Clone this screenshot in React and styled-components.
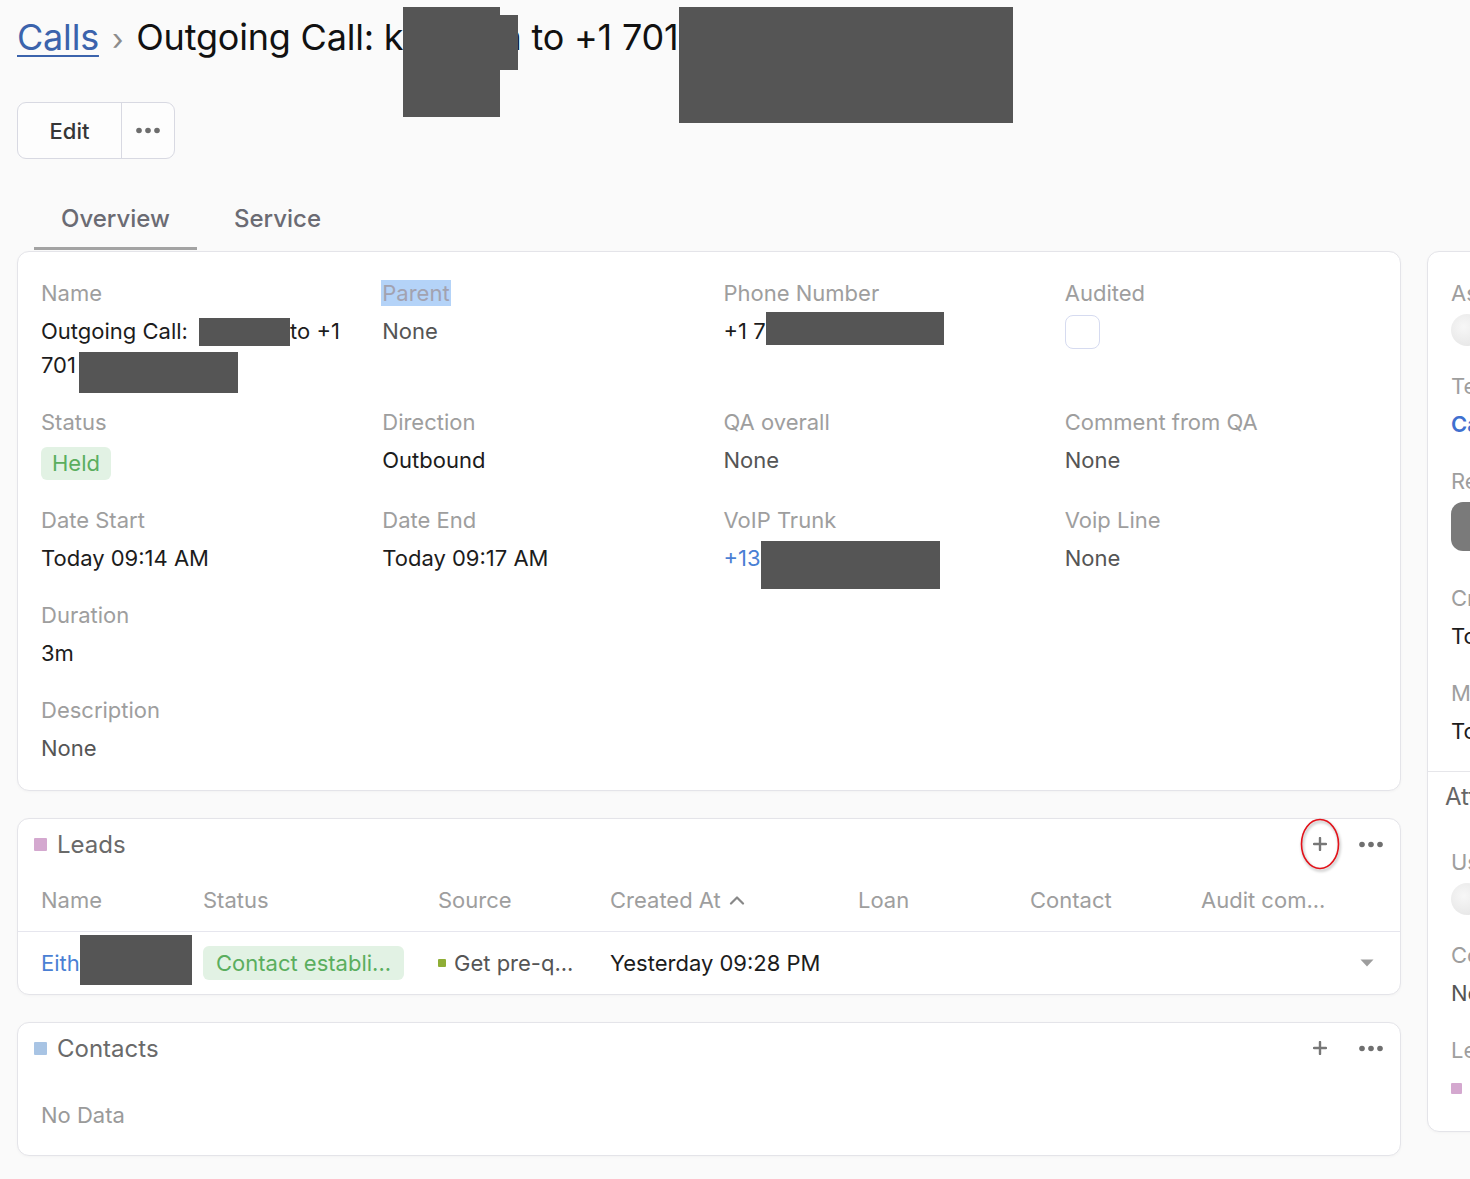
import React from 'react';
import styled, { createGlobalStyle } from 'styled-components';

const Global = createGlobalStyle`
  html, body { margin: 0; padding: 0; background: #fafafa; overflow: hidden; }
  body { font-family: Inter, "Noto Sans", sans-serif; color: #1c1c1c; -webkit-font-smoothing: antialiased; }
  *, *::before, *::after { box-sizing: border-box; }
`;

const Page = styled.div`
  width: 1470px;
  height: 1179px;
  overflow: hidden;
  padding: 15px 0 0 17px;
`;

const Breadcrumb = styled.h1`
  margin: 0;
  display: flex;
  align-items: baseline;
  gap: 13px;
  font-size: 36px;
  line-height: 44px;
  font-weight: 400;
  letter-spacing: -0.2px;
  color: #111;
  white-space: nowrap;
`;

const CrumbLink = styled.a`
  color: #3b63ac;
  text-decoration: underline;
  text-decoration-thickness: 2px;
  text-underline-offset: 5px;
`;

const CrumbSep = styled.span`
  color: #8c8c8c;
  font-size: 30px;
`;

const Redact = styled.span`
  display: inline-block;
  position: relative;
  width: ${p => p.$w}px;
  height: 0;
  vertical-align: baseline;
  margin-left: ${p => p.$ml || 0}px;
  &::before {
    content: '';
    position: absolute;
    left: 0;
    width: ${p => p.$w}px;
    top: ${p => p.$t}px;
    height: ${p => p.$h}px;
    background: #555;
  }
`;

const TitleRedact = styled(Redact)`
  &::after {
    content: '';
    position: absolute;
    left: ${p => p.$w}px;
    width: 18px;
    top: -35px;
    height: 55px;
    background: #555;
  }
`;

const BtnGroup = styled.div`
  display: inline-flex;
  margin-top: 41px;
  height: 57px;
  border: 1.5px solid #d8d9e2;
  border-radius: 9px;
  background: #fdfdfd;
  overflow: hidden;
`;

const Btn = styled.button`
  width: ${p => p.$w}px;
  border: 0;
  padding: 0;
  background: transparent;
  font-family: Inter, sans-serif;
  font-size: 22px;
  font-weight: 500;
  color: #363636;
  display: flex;
  align-items: center;
  justify-content: center;
  & + & { border-left: 1.5px solid #d8d9e2; }
`;

const Tabs = styled.nav`
  display: flex;
  gap: 10px;
  height: 64px;
  margin: 27px 0 0 17px;
`;

const Tab = styled.div`
  display: flex;
  align-items: center;
  padding: 3px 27px 0;
  font-size: 24px;
  font-weight: 500;
  color: #6b6b73;
  border-bottom: 3px solid ${p => (p.$active ? '#a3a3a3' : 'transparent')};
`;

const Columns = styled.div`
  display: grid;
  grid-template-columns: 1384px 380px;
  column-gap: 26px;
  align-items: start;
  margin-top: 1px;
`;

const MainCol = styled.div`
  display: flex;
  flex-direction: column;
  gap: 27px;
`;

const Card = styled.section`
  background: #fff;
  border: 1px solid #e4e4e9;
  border-radius: 12px;
  box-shadow: 0 1px 3px rgba(0, 0, 0, 0.03);
  position: relative;
`;

const FieldGrid = styled.div`
  display: grid;
  grid-template-columns: repeat(4, 1fr);
  column-gap: 20px;
  row-gap: 25px;
  padding: 26px 14px 25px 23px;
`;

const Field = styled.div``;

const Label = styled.div`
  font-size: 22px;
  line-height: 30px;
  color: #9e9e9e;
  white-space: nowrap;
`;

const Selected = styled.span`
  background: #b4d3f8;
  color: #a2a2b0;
  padding: 0 1px;
  margin-left: -1px;
`;

const Value = styled.div`
  margin-top: 6px;
  font-size: 22px;
  line-height: 34px;
  color: ${p => (p.$muted ? '#555' : '#1c1c1c')};
  display: ${p => (p.$flex ? 'flex' : 'block')};
  white-space: nowrap;
`;

const Link = styled.span`
  color: #4a7fd4;
`;

const Badge = styled.span`
  display: inline-block;
  height: ${p => p.$h || 33}px;
  line-height: ${p => p.$h || 33}px;
  margin-top: ${p => p.$mt || 0}px;
  padding: 0 ${p => p.$px || 11}px;
  border-radius: 6px;
  background: #e2f2e4;
  color: #5aae5e;
  font-size: 22px;
  white-space: nowrap;
`;

const Checkbox = styled.span`
  display: block;
  width: 35px;
  height: 34px;
  margin-top: 1px;
  border: 1.5px solid #d6dbf0;
  border-radius: 8px;
  background: #fff;
`;

const PanelHeader = styled.header`
  display: flex;
  align-items: center;
  height: 50px;
  padding: 0 13px 0 16px;
  gap: 10px;
`;

const Swatch = styled.span`
  display: inline-block;
  flex: none;
  width: ${p => p.$s || 13}px;
  height: ${p => p.$s || 13}px;
  margin-top: ${p => p.$mt || 0}px;
  background: ${p => p.$color};
  border-radius: 1px;
`;

const PanelTitle = styled.h3`
  margin: 0;
  flex: 1;
  font-size: 24px;
  font-weight: 400;
  color: #6a6a6a;
`;

const Actions = styled.div`
  display: flex;
  gap: 19px;
`;

const IconBtn = styled.button`
  position: relative;
  width: 32px;
  height: 32px;
  padding: 0;
  border: 0;
  background: none;
  display: flex;
  align-items: center;
  justify-content: center;
`;

const Annotation = styled.svg`
  position: absolute;
  left: -4px;
  top: -10px;
  width: 40px;
  height: 52px;
  overflow: visible;
  filter: drop-shadow(1px 2px 1.5px rgba(0, 0, 0, 0.35));
  pointer-events: none;
`;

const TableRow = styled.div`
  display: grid;
  grid-template-columns: 162px 235px 172px 248px 172px 171px 1fr 40px;
  align-items: center;
  height: ${p => (p.$head ? 63 : 62)}px;
  padding: 0 13px 0 23px;
  border-bottom: ${p => (p.$head ? '1px solid #e6e6ee' : '0')};
  font-size: 22px;
  line-height: 34px;
`;

const HeadCell = styled.div`
  color: #9e9e9e;
  display: flex;
  align-items: center;
  gap: 8px;
  white-space: nowrap;
`;

const Cell = styled.div`
  display: flex;
  align-items: center;
  gap: 8px;
  white-space: nowrap;
  color: ${p => p.$c || '#1c1c1c'};
`;

const CaretCell = styled.div`
  display: flex;
  justify-content: center;
`;

const Empty = styled.div`
  padding: 27px 23px 25px;
  font-size: 22px;
  line-height: 30px;
  color: #9a9a9a;
`;

const SideSection = styled.div`
  display: flex;
  flex-direction: column;
  gap: 25px;
  padding: ${p => p.$pad};
  & + & { border-top: 1px solid #e6e6ea; }
`;

const SideBlock = styled.div`
  padding-left: ${p => p.$indent || 0}px;
`;

const SideHead = styled.div`
  height: 50px;
  line-height: 50px;
  padding-left: 17px;
  font-size: 24px;
  color: #666;
`;

const Avatar = styled.div`
  margin-top: 6px;
  width: 32px;
  height: 32px;
  border-radius: 50%;
  background: radial-gradient(circle at 40% 40%, #f7f7f7, #e2e2e2);
`;

const Strong = styled.span`
  color: #3f70cf;
  font-weight: 600;
`;

const AudioBar = styled.div`
  margin: 6px 0 7px;
  width: 300px;
  height: 49px;
  border-radius: 12px;
  background: #7a7a7a;
`;

const Dots = ({ color = '#6f6f6f' }) => (
  <svg width="24" height="7" viewBox="0 0 24 7">
    <circle cx="3" cy="3.5" r="2.8" fill={color} />
    <circle cx="12" cy="3.5" r="2.8" fill={color} />
    <circle cx="21" cy="3.5" r="2.8" fill={color} />
  </svg>
);

const Plus = () => (
  <svg width="14" height="14" viewBox="0 0 14 14">
    <path d="M7 1v12M1 7h12" stroke="#777" strokeWidth="2.4" strokeLinecap="round" />
  </svg>
);

const ChevronUp = () => (
  <svg width="16" height="10" viewBox="0 0 16 10">
    <path d="M2 8.5 8 2.5l6 6" fill="none" stroke="#888" strokeWidth="2.2" strokeLinecap="round" strokeLinejoin="round" />
  </svg>
);

const CaretDown = () => (
  <svg width="14" height="8" viewBox="0 0 14 8">
    <path d="M0.5 0.5h13L7 7.5z" fill="#9d9d9d" />
  </svg>
);

const Panel = ({ title, color, annotate, children }) => (
  <Card>
    <PanelHeader>
      <Swatch $color={color} />
      <PanelTitle>{title}</PanelTitle>
      <Actions>
        <IconBtn>
          <Plus />
          {annotate && (
            <Annotation viewBox="0 0 40 52">
              <ellipse cx="20" cy="26" rx="18.5" ry="24.5" fill="none" stroke="#e3121a" strokeWidth="1.6" />
            </Annotation>
          )}
        </IconBtn>
        <IconBtn>
          <Dots />
        </IconBtn>
      </Actions>
    </PanelHeader>
    {children}
  </Card>
);

export default function App() {
  return (
    <Page>
      <Global />
      <Breadcrumb>
        <CrumbLink>Calls</CrumbLink>
        <CrumbSep>›</CrumbSep>
        <span>
          Outgoing Call: k<TitleRedact $w={97} $t={-43} $h={110} />n to +1 701
          <Redact $w={334} $t={-43} $h={116} />
        </span>
      </Breadcrumb>

      <BtnGroup>
        <Btn $w={103}>Edit</Btn>
        <Btn $w={53}>
          <Dots color="#6d6d6d" />
        </Btn>
      </BtnGroup>

      <Tabs>
        <Tab $active>Overview</Tab>
        <Tab>Service</Tab>
      </Tabs>

      <Columns>
        <MainCol>
          <Card>
            <FieldGrid>
              <Field>
                <Label>Name</Label>
                <Value>
                  Outgoing Call: <Redact $w={91} $t={-21} $h={28} $ml={5} />to +1
                  <br />
                  701<Redact $w={159} $t={-21} $h={41} $ml={3} />
                </Value>
              </Field>
              <Field>
                <Label><Selected>Parent</Selected></Label>
                <Value $muted>None</Value>
              </Field>
              <Field>
                <Label>Phone Number</Label>
                <Value>+1 7<Redact $w={178} $t={-27} $h={33} /></Value>
              </Field>
              <Field>
                <Label>Audited</Label>
                <Value $flex><Checkbox /></Value>
              </Field>

              <Field>
                <Label>Status</Label>
                <Value $flex><Badge $mt={4}>Held</Badge></Value>
              </Field>
              <Field>
                <Label>Direction</Label>
                <Value>Outbound</Value>
              </Field>
              <Field>
                <Label>QA overall</Label>
                <Value $muted>None</Value>
              </Field>
              <Field>
                <Label>Comment from QA</Label>
                <Value $muted>None</Value>
              </Field>

              <Field>
                <Label>Date Start</Label>
                <Value>Today 09:14 AM</Value>
              </Field>
              <Field>
                <Label>Date End</Label>
                <Value>Today 09:17 AM</Value>
              </Field>
              <Field>
                <Label>VoIP Trunk</Label>
                <Value><Link>+13</Link><Redact $w={179} $t={-25} $h={48} /></Value>
              </Field>
              <Field>
                <Label>Voip Line</Label>
                <Value $muted>None</Value>
              </Field>

              <Field>
                <Label>Duration</Label>
                <Value>3m</Value>
              </Field>
              <Field /><Field /><Field />

              <Field>
                <Label>Description</Label>
                <Value $muted>None</Value>
              </Field>
            </FieldGrid>
          </Card>

          <Panel title="Leads" color="#d4a8cf" annotate>
            <TableRow $head>
              <HeadCell>Name</HeadCell>
              <HeadCell>Status</HeadCell>
              <HeadCell>Source</HeadCell>
              <HeadCell>Created At <ChevronUp /></HeadCell>
              <HeadCell>Loan</HeadCell>
              <HeadCell>Contact</HeadCell>
              <HeadCell>Audit com...</HeadCell>
              <HeadCell />
            </TableRow>
            <TableRow>
              <Cell>
                <span><Link>Eith</Link><Redact $w={112} $t={-36} $h={50} /></span>
              </Cell>
              <Cell><Badge $h={34} $px={13}>Contact establi...</Badge></Cell>
              <Cell $c="#555"><Swatch $color="#8fae36" $s={8} />Get pre-q...</Cell>
              <Cell>Yesterday 09:28 PM</Cell>
              <Cell />
              <Cell />
              <Cell />
              <CaretCell><CaretDown /></CaretCell>
            </TableRow>
          </Panel>

          <Panel title="Contacts" color="#a8c4e4">
            <Empty>No Data</Empty>
          </Panel>
        </MainCol>

        <Card>
          <SideSection $pad="26px 20px 23px 23px">
            <SideBlock>
              <Label>Assigned User</Label>
              <Avatar />
            </SideBlock>
            <SideBlock>
              <Label>Teams</Label>
              <Value><Strong>Call Center</Strong></Value>
            </SideBlock>
            <SideBlock>
              <Label>Recording</Label>
              <AudioBar />
            </SideBlock>
            <SideBlock>
              <Label>Created</Label>
              <Value>Today 09:17 AM</Value>
            </SideBlock>
            <SideBlock>
              <Label>Modified</Label>
              <Value>Today 09:17 AM</Value>
            </SideBlock>
          </SideSection>
          <SideSection $pad="0 0 37px 0">
            <SideHead>Attendees</SideHead>
            <SideBlock $indent={23}>
              <Label>Users</Label>
              <Avatar />
            </SideBlock>
            <SideBlock $indent={23}>
              <Label>Contacts</Label>
              <Value $muted>None</Value>
            </SideBlock>
            <SideBlock $indent={23}>
              <Label>Leads</Label>
              <Value $flex><Swatch $color="#d4a8cf" $s={11} $mt={12} /></Value>
            </SideBlock>
          </SideSection>
        </Card>
      </Columns>
    </Page>
  );
}
